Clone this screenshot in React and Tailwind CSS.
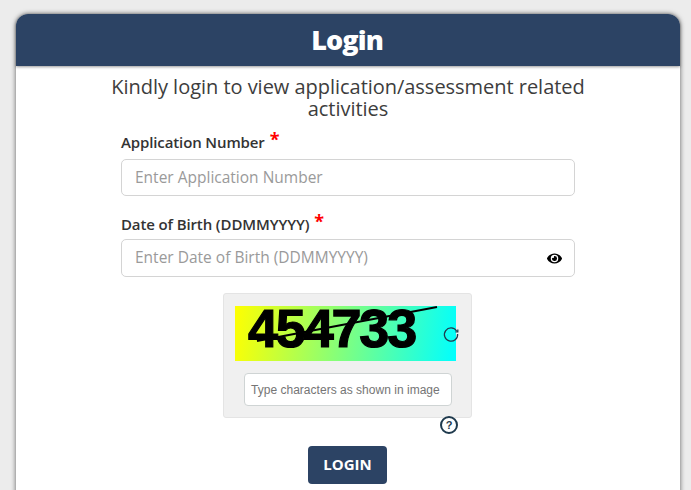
import React from "react";
import { FaEye } from "react-icons/fa";

function Star() {
  return <span className="text-[#ff0000] text-[18px] font-bold leading-none ml-[5px] relative top-[-2px]">*</span>;
}

export default function App() {
  return (
    <div className="w-[691px] h-[490px] overflow-hidden bg-[#ececec] pt-[14px] pl-[16px] font-['Open_Sans',sans-serif]">
      <div className="w-[664px] h-[500px] bg-white rounded-t-[12px] shadow-[0_0_5px_rgba(0,0,0,0.6)]">
        <div className="h-[52px] bg-[#2c4364] rounded-t-[12px] flex items-center justify-center pr-[2px] text-white text-[27px] font-extrabold tracking-[-0.9px] shadow-[0_1px_3px_rgba(0,0,0,0.4)]">
          Login
        </div>
        <p className="mx-auto mt-[10px] w-[500px] text-center text-[20px] leading-[22px] tracking-[-0.03px] text-[#3d3d3d]">
          Kindly login to view application/assessment related activities
        </p>
        <div className="ml-[105px] w-[454px] mt-[8px]">
          <label className="block h-[28px] text-[15px] font-semibold tracking-[-0.12px] text-[#333] leading-[28px]">
            Application Number<Star />
          </label>
          <div className="mt-[3px] h-[37px] rounded-[5px] border border-[#d4d4d4] flex items-center px-[13px] text-[15.5px] text-[#9a9a9a]">
            Enter Application Number
          </div>
          <label className="block mt-[14px] h-[28px] text-[15px] font-semibold tracking-[-0.12px] text-[#333] leading-[28px]">
            Date of Birth (DDMMYYYY)<Star />
          </label>
          <div className="mt-[1px] h-[38px] rounded-[5px] border border-[#d4d4d4] flex items-center justify-between pl-[13px] pr-[12px] text-[15.5px] text-[#9a9a9a]">
            <span>Enter Date of Birth (DDMMYYYY)</span>
            <FaEye className="text-[15px] text-black" />
          </div>
        </div>
        <div className="ml-[207px] mt-[16px] w-[249px] h-[125px] bg-[#f0f0f0] border border-[#e4e4e4] rounded-[3px] pt-[12px] pl-[11px] relative">
          <div className="w-[221px] h-[55px] bg-[linear-gradient(98deg,#ffff00,#00ffff)] relative">
            <span className="absolute left-[13px] top-0 text-[54px] font-bold text-black font-['Liberation_Sans',sans-serif] tracking-[-2.2px] leading-[44px] [-webkit-text-stroke:1.2px_black]">454733</span>
            <svg className="absolute inset-0" width="221" height="55" viewBox="0 0 221 55">
              <line x1="22" y1="35" x2="202" y2="1" stroke="black" strokeWidth="2" />
            </svg>
          </div>
          <svg className="absolute left-[218px] top-[31px]" width="18" height="18" viewBox="0 0 18 18" fill="none" stroke="#1f3a4d" strokeWidth="1.3">
            <path d="M14.6 6A6.6 6.6 0 1 0 15.6 9" />
            <path d="M15.8 4.4v2.4h-2.4" />
          </svg>
          <div className="mt-[12px] ml-[9px] w-[208px] h-[33px] bg-white border border-[#cfd4d4] rounded-[4px] flex items-center pl-[6px] text-[12px] tracking-[0.02px] text-[#757575] font-['Liberation_Sans',sans-serif]">
            Type characters as shown in image
          </div>
          <div className="absolute left-[216px] top-[122px] w-[18px] h-[18px] rounded-full border-2 border-[#1f3a4d] flex items-center justify-center text-[11px] font-bold text-[#1f3a4d] leading-none font-['Liberation_Sans',sans-serif]">
            ?
          </div>
        </div>
        <div className="mt-[28px] ml-[292px] w-[79px] h-[38px] bg-[#2c4364] rounded-[4px] flex items-center justify-center pb-[2px] text-white text-[15px] font-bold">
          LOGIN
        </div>
      </div>
    </div>
  );
}
